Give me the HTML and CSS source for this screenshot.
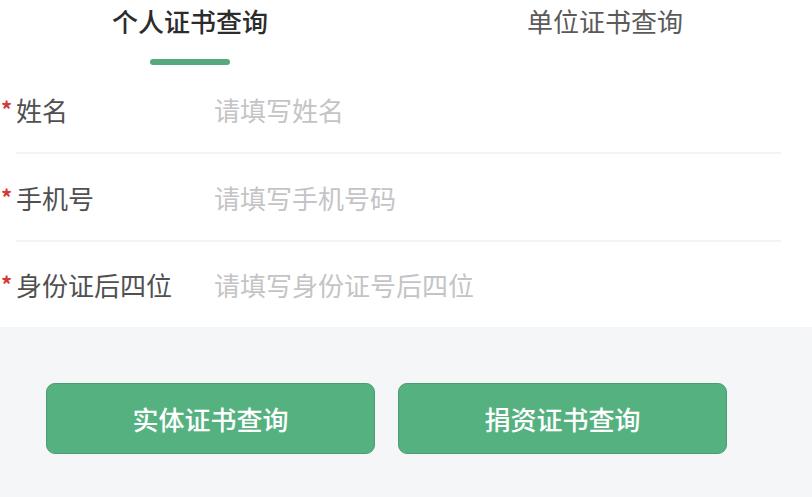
FILE: index.html
```html
<!DOCTYPE html>
<html lang="zh">
<head>
<meta charset="utf-8">
<link rel="stylesheet" href="styles.css">
</head>
<body>
<div class="page">
  <div class="top">
    <div class="tabs">
      <div class="tab active"><span class="tab-text">个人证书查询</span><span class="bar"></span></div>
      <div class="tab"><span class="tab-text">单位证书查询</span></div>
    </div>
    <div class="form">
      <div class="row">
        <div class="label"><span class="star">*</span>姓名</div>
        <div class="ph">请填写姓名</div>
      </div>
      <div class="row">
        <div class="label"><span class="star">*</span>手机号</div>
        <div class="ph">请填写手机号码</div>
      </div>
      <div class="row last">
        <div class="label"><span class="star">*</span>身份证后四位</div>
        <div class="ph">请填写身份证号后四位</div>
      </div>
    </div>
  </div>
  <div class="bottom">
    <div class="btn">实体证书查询</div>
    <div class="btn">捐资证书查询</div>
  </div>
</div>
</body>
</html>
```

FILE: styles.css
```css
html, body {
  margin: 0;
  padding: 0;
  background: #f5f6f8;
  font-family: "Noto Sans CJK SC", "Noto Sans", sans-serif;
}
.page {
  width: 812px;
  height: 497px;
  overflow: hidden;
  display: flex;
  flex-direction: column;
}
.top {
  background: #ffffff;
}
.tabs {
  display: flex;
  height: 66px;
}
.tab {
  width: 380px;
  flex: none;
  display: flex;
  flex-direction: column;
  align-items: center;
}
.tab + .tab {
  width: 450px;
}
.tab-text {
  font-size: 26px;
  line-height: 42px;
  color: #5a5a5a;
}
.tab.active .tab-text {
  color: #2c2c2c;
  font-weight: 500;
}
.bar {
  margin-top: 17px;
  width: 80px;
  height: 6px;
  border-radius: 3px;
  background: #56a97d;
}
.form {
  padding-left: 16px;
  padding-right: 31px;
}
.row {
  height: 86px;
  display: flex;
  align-items: center;
  border-bottom: 2px solid #f3f3f3;
}
.row.last {
  border-bottom: none;
  height: 85px;
}
.label {
  width: 198px;
  flex: none;
  font-size: 26px;
  color: #505050;
  position: relative;
}
.star {
  position: absolute;
  left: -15px;
  top: 1px;
  color: #d23a3a;
  font-size: 22px;
  font-weight: 700;
}
.ph {
  font-size: 26px;
  color: #c4c4c6;
}
.bottom {
  flex: 1;
  background: #f5f6f8;
  display: flex;
  gap: 23px;
  padding: 56px 0 0 46px;
}
.btn {
  width: 329px;
  height: 71px;
  box-sizing: border-box;
  border: 1px solid #4c9c72;
  border-radius: 9px;
  background: #55b280;
  color: #ffffff;
  font-size: 26px;
  font-weight: 500;
  display: flex;
  align-items: center;
  justify-content: center;
}
```
